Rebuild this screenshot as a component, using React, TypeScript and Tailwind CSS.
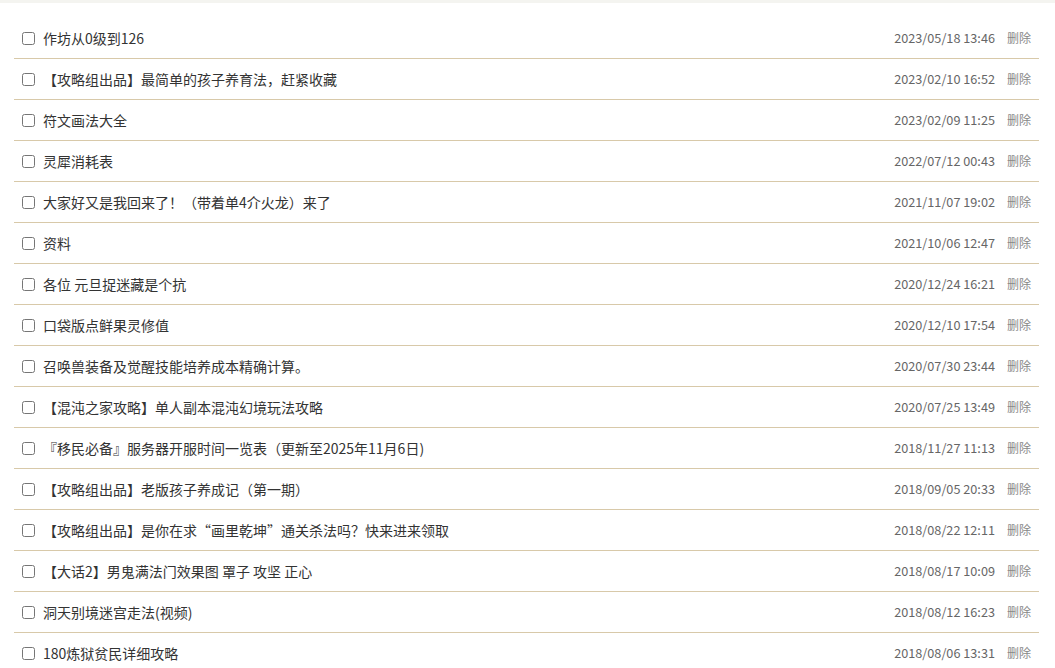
import React, { useState } from 'react';

type Post = {
  id: number;
  title: string;
  time: string;
};

const posts: Post[] = [
  { id: 1, title: '作坊从0级到126', time: '2023/05/18 13:46' },
  { id: 2, title: '【攻略组出品】最简单的孩子养育法，赶紧收藏', time: '2023/02/10 16:52' },
  { id: 3, title: '符文画法大全', time: '2023/02/09 11:25' },
  { id: 4, title: '灵犀消耗表', time: '2022/07/12 00:43' },
  { id: 5, title: '大家好又是我回来了！（带着单4介火龙）来了', time: '2021/11/07 19:02' },
  { id: 6, title: '资料', time: '2021/10/06 12:47' },
  { id: 7, title: '各位 元旦捉迷藏是个抗', time: '2020/12/24 16:21' },
  { id: 8, title: '口袋版点鲜果灵修值', time: '2020/12/10 17:54' },
  { id: 9, title: '召唤兽装备及觉醒技能培养成本精确计算。', time: '2020/07/30 23:44' },
  { id: 10, title: '【混沌之家攻略】单人副本混沌幻境玩法攻略', time: '2020/07/25 13:49' },
  { id: 11, title: '『移民必备』服务器开服时间一览表（更新至2025年11月6日)', time: '2018/11/27 11:13' },
  { id: 12, title: '【攻略组出品】老版孩子养成记（第一期）', time: '2018/09/05 20:33' },
  { id: 13, title: '【攻略组出品】是你在求“画里乾坤”通关杀法吗？快来进来领取', time: '2018/08/22 12:11' },
  { id: 14, title: '【大话2】男鬼满法门效果图 罩子 攻坚 正心', time: '2018/08/17 10:09' },
  { id: 15, title: '洞天别境迷宫走法(视频)', time: '2018/08/12 16:23' },
  { id: 16, title: '180炼狱贫民详细攻略', time: '2018/08/06 13:31' },
];

const App: React.FC = () => {
  const [list, setList] = useState(posts);
  const [checked, setChecked] = useState<number[]>([]);

  const toggle = (id: number) => {
    setChecked((prev) => (prev.includes(id) ? prev.filter((x) => x !== id) : [...prev, id]));
  };

  const remove = (id: number) => {
    setList((prev) => prev.filter((p) => p.id !== id));
  };

  return (
    <div
      className="w-full min-h-screen bg-white"
      style={{ fontFamily: '"Noto Sans CJK SC", "Noto Sans", sans-serif' }}
    >
      <div className="h-[3px] bg-[#f4f4f0]" />
      <ul className="ml-[14px] mr-[16px] mt-[15px]">
        {list.map((post) => (
          <li
            key={post.id}
            className="flex items-center h-[41px] pl-[8px] pr-[8px] border-b border-[#d8c9a9]"
          >
            <input
              type="checkbox"
              checked={checked.includes(post.id)}
              onChange={() => toggle(post.id)}
              className="w-[13px] h-[13px] m-0 accent-[#777]"
            />
            <span className="ml-[8px] flex-1 min-w-0 text-[14px] leading-[20px] text-[#333] whitespace-nowrap">
              {post.title}
            </span>
            <span className="text-[12.7px] leading-[20px] text-[#666]">{post.time}</span>
            <button
              onClick={() => remove(post.id)}
              className="ml-[12px] text-[12px] leading-[20px] text-[#888] cursor-pointer"
            >
              删除
            </button>
          </li>
        ))}
      </ul>
    </div>
  );
};

export default App;
